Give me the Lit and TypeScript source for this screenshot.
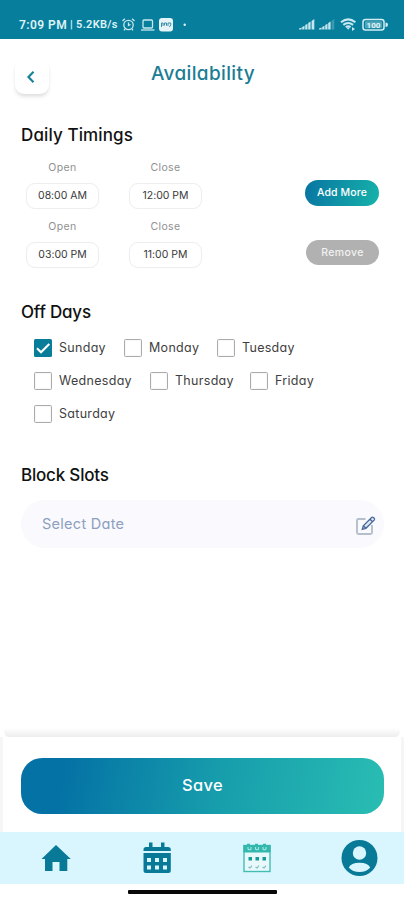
import { LitElement, html, css, svg } from "lit";
import { customElement, property, state } from "lit/decorators.js";
import { classMap } from "lit/directives/class-map.js";

@customElement("status-bar")
class StatusBar extends LitElement {
  static styles = css`
    :host { display: flex; box-sizing: border-box; height: 39px; padding: 10px 15px 0 19px; background: #087e9d; color: #dff3f7; align-items: center; justify-content: space-between; }
    .side { display: flex; align-items: center; height: 20px; }
    .time { font: 600 12px/20px Roboto, sans-serif; letter-spacing: 0.45px; width: 51px; white-space: nowrap; }
    .rate { font: 600 11px/20px Roboto, sans-serif; letter-spacing: 0.3px; width: 50px; white-space: nowrap; }
    svg { display: block; }
  `;
  private bars(weak: boolean) {
    return svg`<path d="M0 11.500h2.600V9.600L0 10.600zM3.200 11.500h2.300V7.800L3.200 9zM6.200 11.500h2.300V5.800L6.200 7zM9.200 11.500h2.400V3.500L9.200 5z" fill="#c4e6ee"/><path d="M12.600 11.500h2.700V1l-2.700 2z" fill=${weak ? "#3c9bb3" : "#c4e6ee"}/>`;
  }
  render() {
    return html`
      <div class="side">
        <span class="time">7:09 PM</span><span class="rate">| 5.2KB/s</span>
        <svg width="68" height="16" viewBox="0 0 68 16" fill="none" stroke="#c8e9f0" stroke-width="1.300">
          <circle cx="8.500" cy="8" r="4.700"/><path d="M8.500 5.500v3l2-1M2.500 4l2.400-2.200M14.500 4l-2.400-2.200M5 12l-1 1.300M12 12l1 1.300"/>
          <rect x="23" y="3" width="9.500" height="8" rx="1"/><path d="M21 13h13.500"/>
          <rect x="39" y="1" width="14" height="13.500" rx="3" fill="#e4f4f7" stroke="none"/>
          <path d="M41.500 10V6h1.600v3M44.500 8.500V6h2v2.700M48 9V6h2.800v2l-1.500 2" stroke="#398fa8" stroke-width="1"/>
          <circle cx="64.700" cy="7.800" r="1.200" fill="#dff3f7" stroke="none"/>
        </svg>
      </div>
      <div class="side">
        <svg width="90" height="14" viewBox="0 0 90 14">
          ${this.bars(false)}
          <g transform="translate(20 0)">${this.bars(true)}</g>
          <g fill="none" stroke="#c8e9f0" stroke-width="2"><path d="M42 4.200q7.200-5.600 14.400 0M44.300 6.900q4.900-3.800 9.800 0M46.800 9.200q2.400-1.800 4.800 0"/></g>
          <path d="M47.400 9.600l1.800 2.200 1.800-2.200zM53 9l3 2-3 2z" fill="#c8e9f0"/>
          <rect x="64" y="1.500" width="21" height="10.500" rx="2.500" fill="none" stroke="#d2edf3" stroke-width="1.500"/>
          <path d="M86.500 4.500q2.500 0 2.500 2.300t-2.500 2.300z" fill="#d2edf3"/>
          <rect x="66" y="3.300" width="17" height="7" rx="1" fill="#4fa6bb"/>
          <text x="74.500" y="10" text-anchor="middle" font-family="Roboto" font-size="8" font-weight="700" fill="#e4f5f8">100</text>
        </svg>
      </div>`;
  }
}

@customElement("time-row")
class TimeRow extends LitElement {
  @property() open = "";
  @property() close = "";
  @property() action = "";
  @property({ type: Boolean }) muted = false;
  static styles = css`
    :host { display: flex; height: 59px; padding: 0 25px 0 26px; }
    .slot { width: 73px; margin-right: 30px; text-align: center; }
    .label { height: 23px; font-size: 10.500px; line-height: 16px; color: #909090; letter-spacing: 0.4px; }
    .value { box-sizing: border-box; height: 26px; border: 1px solid #eeeeee; border-radius: 9px; font-size: 10.500px; line-height: 23px; color: #3a3a3a; letter-spacing: -0.02px; white-space: nowrap; box-shadow: 0 0 1px #f3f3f3; }
    button { width: 74px; height: 26px; margin: 20px 0 0 auto; padding: 0 0 1px; border: 0; border-radius: 13px; font: 500 10.500px/25px Inter, sans-serif; font-feature-settings: "cv11"; letter-spacing: 0.1px; color: #fff; background: linear-gradient(105deg, #0874a2, #16b3aa); white-space: nowrap; }
    .muted { background: #b1b1b1; color: #f2f2f2; letter-spacing: 0.4px; width: 73px; height: 25px; margin-top: 21px; }
  `;
  render() {
    return html`
      <div class="slot"><div class="label">Open</div><div class="value">${this.open}</div></div>
      <div class="slot"><div class="label">Close</div><div class="value">${this.close}</div></div>
      <button class=${classMap({ muted: this.muted })}>${this.action}</button>`;
  }
}

@customElement("day-check")
class DayCheck extends LitElement {
  @property() label = "";
  @property({ type: Boolean }) checked = false;
  static styles = css`
    :host { display: flex; align-items: center; gap: 7px; height: 18px; }
    .box { box-sizing: border-box; width: 18px; height: 18px; border: 1px solid #ababab; border-radius: 1.500px; background: #fff; box-shadow: inset 0 0 1px #b5b5b5; flex: none; }
    .on { border: 0; background: #087d9a; box-shadow: none; }
    .name { font-size: 12.500px; line-height: 18px; color: #3f3f3f; letter-spacing: 0.3px; white-space: nowrap; }
    svg { display: block; }
  `;
  render() {
    return html`
      <div class=${classMap({ box: true, on: this.checked })}>
        ${this.checked ? html`<svg width="18" height="18" viewBox="0 0 18 18"><path d="M3 9.200l4 4L15.300 5" fill="none" stroke="#fff" stroke-width="2.100"/></svg>` : ""}
      </div>
      <span class="name">${this.label}</span>`;
  }
}

@customElement("app-root")
class AppRoot extends LitElement {
  @state() private weeks = [
    [{ label: "Sunday", span: 90, on: true }, { label: "Monday", span: 93 }, { label: "Tuesday", span: 80 }],
    [{ label: "Wednesday", span: 116 }, { label: "Thursday", span: 100 }, { label: "Friday", span: 70 }],
    [{ label: "Saturday", span: 90 }],
  ];
  static styles = css`
    :host { display: flex; flex-direction: column; width: 404px; height: 900px; overflow: hidden; background: #fff; font-family: Inter, "Open Sans", sans-serif; font-feature-settings: "cv11"; color: #111; }
    header { display: grid; grid-template-columns: 34px 1fr 34px; height: 56px; padding: 0 15px; margin-top: 20px; box-sizing: border-box; flex: none; }
    .back { width: 34px; height: 35px; border-radius: 9px; background: #fff; box-shadow: 0 3px 4px -1px #d8d8d8; display: grid; place-items: center; }
    .back svg { margin-right: 2px; }
    .title { text-align: center; margin: 0; padding-left: 2px; font-size: 19px; font-weight: 500; line-height: 30px; letter-spacing: 0.35px; color: #1b7d94; }
    h2 { margin: 0 0 0 21px; height: 24px; font-size: 17px; font-weight: 500; line-height: 26px; letter-spacing: -0.2px; flex: none; white-space: nowrap; }
    .daily { margin-top: 7px; letter-spacing: 0.12px; }
    .times { margin-top: 14px; height: 118px; flex: none; }
    .off { margin-top: 21px; }
    .days { display: flex; flex-direction: column; gap: 15px; margin: 16px 0 0 34px; height: 84px; flex: none; }
    .week { display: flex; height: 18px; }
    .block { margin-top: 39px; }
    .field { box-sizing: border-box; display: flex; align-items: center; justify-content: space-between; height: 48px; margin: 14px 20px 0 21px; padding: 0 8px 0 21px; border-radius: 24px; background: #f9f9fe; flex: none; }
    .hint { font-size: 14.500px; line-height: 20px; color: #8c9fbd; letter-spacing: 0.28px; }
    .field svg { margin-top: 3px; }
    .fade { height: 9px; margin: auto 4px 0; border-radius: 9px 9px 12px 12px; background: linear-gradient(#fff, #ededed); flex: none; }
    .foot { box-sizing: border-box; height: 95px; padding: 21px 17px 0 18px; border: solid #f6f6f6; border-width: 0 3px; background: #fff; flex: none; }
    .save { display: block; width: 363px; height: 56px; padding: 0 0 3px; border: 0; border-radius: 21px; background: linear-gradient(100deg, #0472a5 12%, #179eac 55%, #29bdb3); color: #fff; font: 500 16.500px/20px Inter, sans-serif; font-feature-settings: "cv11"; letter-spacing: 0.3px; }
    nav { display: flex; height: 52px; background: #d9f6fe; align-items: center; flex: none; padding-left: 37px; }
    nav svg { flex: none; }
    .handle { width: 149px; height: 4px; border-radius: 1px; background: #080808; margin: 6px 0 6px 128px; flex: none; }
    svg { display: block; }
  `;
  render() {
    return html`
      <status-bar></status-bar>
      <header>
        <div class="back"><svg width="10" height="14" viewBox="0 0 10 14"><path d="M7.500 1.800L2.500 7l5 5.200" fill="none" stroke="#1a8398" stroke-width="2.200"/></svg></div>
        <h1 class="title">Availability</h1>
      </header>
      <h2 class="daily">Daily Timings</h2>
      <div class="times">
        <time-row open="08:00 AM" close="12:00 PM" action="Add More"></time-row>
        <time-row open="03:00 PM" close="11:00 PM" action="Remove" muted></time-row>
      </div>
      <h2 class="off">Off Days</h2>
      <div class="days">
        ${this.weeks.map((w) => html`<div class="week">${w.map((d) => html`<day-check style="width:${d.span}px" .label=${d.label} ?checked=${"on" in d && d.on}></day-check>`)}</div>`)}
      </div>
      <h2 class="block">Block Slots</h2>
      <div class="field">
        <span class="hint">Select Date</span>
        <svg width="21" height="22" viewBox="0 0 21 22" fill="none">
          <path d="M10.500 4H3.500Q2 4 2 5.500v12Q2 19 3.500 19h12q1.500 0 1.500-1.500V10" stroke="#b5bfcc" stroke-width="1.900"/>
          <path d="M7.300 14.300l1-3.500L16.600 2.500q.9-.8 1.800 0l.8.800q.8.900 0 1.800L10.900 13.300zM15 4.100l2.600 2.600M8.300 10.800l2.600 2.500" stroke="#49699a" stroke-width="1.300" fill="#dce6f2"/>
        </svg>
      </div>
      <div class="fade"></div>
      <div class="foot"><button class="save">Save</button></div>
      <nav>
        <svg width="367" height="40" viewBox="37 838 367 40">
          <path d="M41.500 859L56 845l14.800 14h-3.500v12h-7.800v-9h-7v9H45v-12z" fill="#087a98"/>
          <g fill="#087a98">
            <path d="M143.500 851v-1.500q0-2.500 2.500-2.500h3v-4.500h3.500v4.500h8.500v-4.500h3.500v4.500h3.500q2.800 0 2.800 2.500v1.500z"/>
            <path fill-rule="evenodd" d="M143.500 853h27.300v17.500q0 2.500-2.500 2.500H146q-2.500 0-2.500-2.500zM147 858v4h4V858zm8 0v4h4V858zm8 0v4h4V858zM147 865.500v4h4v-4zm8 0v4h4v-4zm8 0v4h4v-4z"/>
          </g>
          <rect x="244" y="845.500" width="26" height="26" fill="#e9f9fb" stroke="#42bdb4" stroke-width="1.400"/>
          <path d="M243.400 845h3.600v-1.200h3v1.200h5v-1.200h3v1.200h5v-1.200h3v1.200h4.600v7.500h-27.200z" fill="#32b8ad"/>
          <path d="M248 847v2q1.500 1.500 3 0v-2M255.500 847v2q1.500 1.500 3 0v-2M263 847v2q1.500 1.500 3 0v-2" fill="none" stroke="#a5e4e2" stroke-width="1.100"/>
          <path d="M248.500 857h3.500v3.500h-3.500zM255.500 857h3.500v3.500h-3.500zM262.500 857h3.500v3.500h-3.500z" fill="#159c98"/>
          <path d="M248.500 867l1.500 1 2-2.300M255.500 867l1.500 1 2-2.300M262.500 867l1.500 1 2-2.300" fill="none" stroke="#79bcc0" stroke-width="1.100"/>
          <circle cx="359.500" cy="858" r="18" fill="#087a98"/>
          <circle cx="359.500" cy="853" r="6.700" fill="#d9f6fe"/>
          <path d="M348.800 867.500q2-4.800 10.700-4.800t10.700 4.800q-4 4.500-10.700 4.500T348.800 867.500z" fill="#d9f6fe"/>
        </svg>
      </nav>
      <div class="handle"></div>`;
  }
}
